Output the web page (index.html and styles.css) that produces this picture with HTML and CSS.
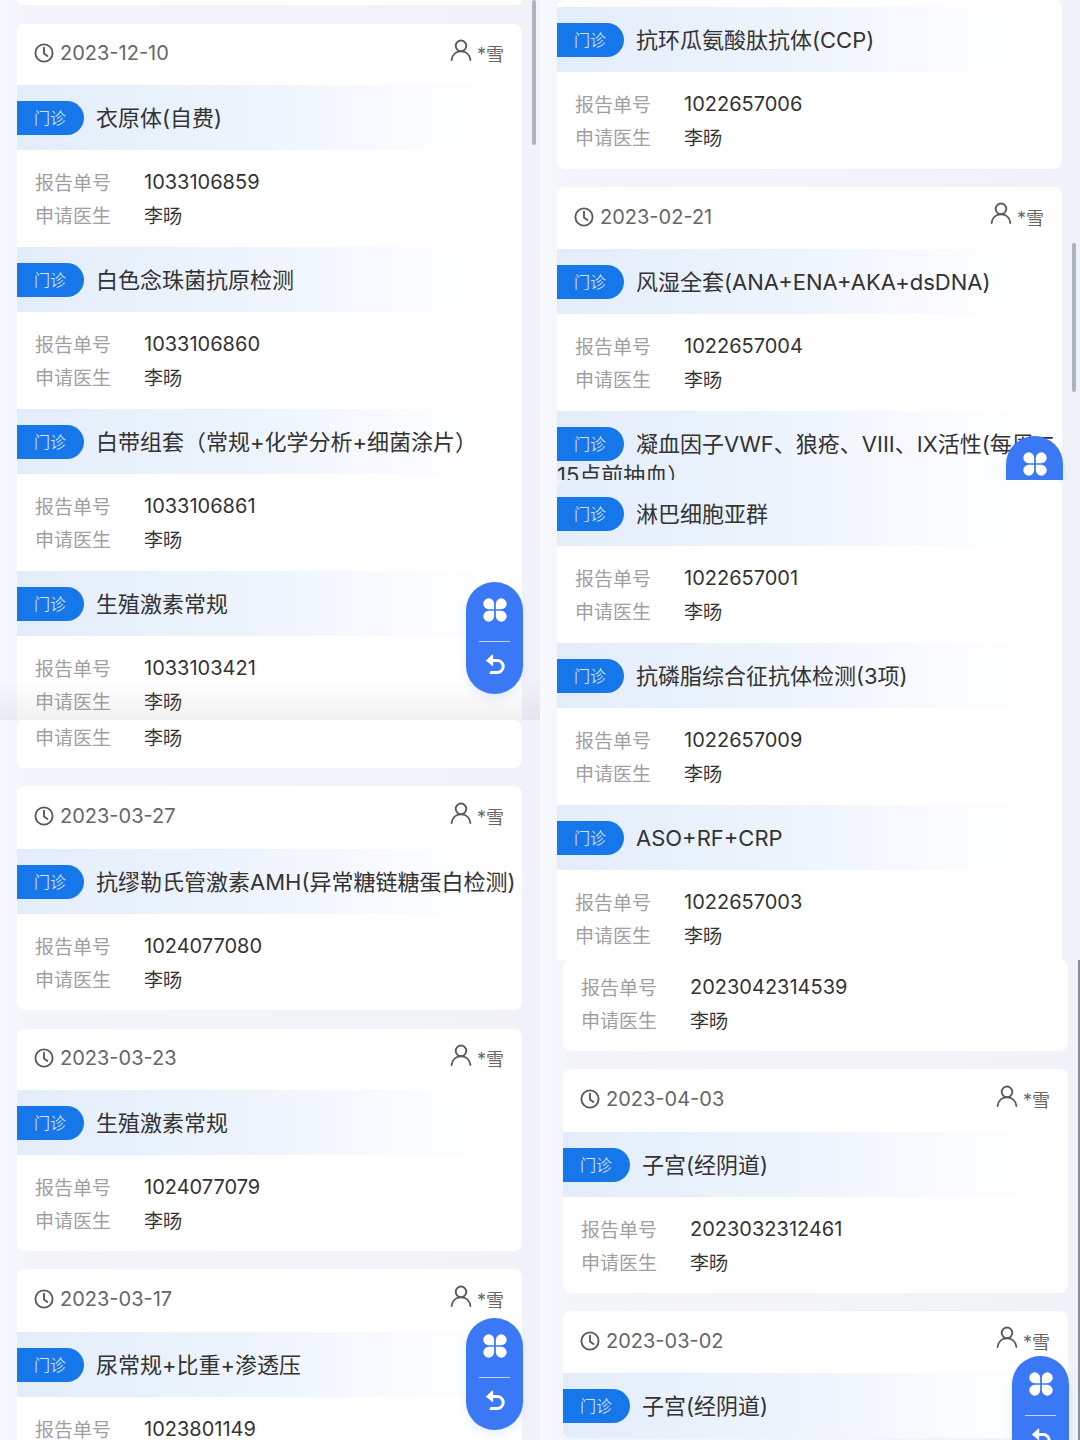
FILE: index.html
```html
<!DOCTYPE html>
<html lang="zh-CN">
<head>
    <meta charset="UTF-8">
    <meta name="viewport" content="width=device-width, initial-scale=1.0">
    <title>检验报告</title>
    <link rel="stylesheet" href="styles.css">
</head>
<body>
    <!-- shared icons -->
    <svg class="icon-defs" width="0" height="0">
        <symbol id="i-clock" viewBox="0 0 20 20">
            <circle cx="10" cy="10" r="8.6" fill="none" stroke="currentColor" stroke-width="1.9"/>
            <path d="M10 4.8V10.4L13.4 13" fill="none" stroke="currentColor" stroke-width="1.9" stroke-linecap="round" stroke-linejoin="round"/>
        </symbol>
        <symbol id="i-user" viewBox="0 0 22 22">
            <circle cx="11" cy="6.8" r="5.3" fill="none" stroke="currentColor" stroke-width="1.9"/>
            <path d="M1.6 21C2.2 15.6 6 12.2 11 12.2S19.8 15.6 20.4 21" fill="none" stroke="currentColor" stroke-width="1.9" stroke-linecap="round"/>
        </symbol>
        <symbol id="i-clover" viewBox="0 0 24 24">
            <path d="M11.2 11.2V6.2A5 5 0 1 0 6.2 11.2Z" fill="currentColor"/>
            <path d="M12.8 11.2V6.2A5 5 0 1 1 17.8 11.2Z" fill="currentColor"/>
            <path d="M11.2 12.8V17.8A5 5 0 1 1 6.2 12.8Z" fill="currentColor"/>
            <path d="M12.8 12.8V17.8A5 5 0 1 0 17.8 12.8Z" fill="currentColor"/>
        </symbol>
        <symbol id="i-back" viewBox="0 0 24 24">
            <path d="M5 8.5H14.2A6 6 0 0 1 14.2 20.5H8" fill="none" stroke="currentColor" stroke-width="3" stroke-linecap="round"/>
            <path d="M9.5 3.2L4 8.5L9.5 13.2Z" fill="currentColor" stroke="currentColor" stroke-width="1.4" stroke-linejoin="round"/>
        </symbol>
    </svg>

    <div class="collage">
        <div class="column">
            <!-- left, upper shot -->
            <section class="shot shot-left-a">
                <div class="card card-edge"></div>
                <div class="card">
                    <div class="card-head">
                        <span class="date"><svg class="icon-clock"><use href="#i-clock"/></svg>2023-12-10</span>
                        <span class="patient"><svg class="icon-user"><use href="#i-user"/></svg>*雪</span>
                    </div>
                    <div class="item-bar"><span class="tag">门诊</span><span class="item-name">衣原体(自费)</span></div>
                    <div class="item-body">
                        <div class="row"><span class="label">报告单号</span><span class="value">1033106859</span></div>
                        <div class="row"><span class="label">申请医生</span><span class="value">李旸</span></div>
                    </div>
                    <div class="item-bar"><span class="tag">门诊</span><span class="item-name">白色念珠菌抗原检测</span></div>
                    <div class="item-body">
                        <div class="row"><span class="label">报告单号</span><span class="value">1033106860</span></div>
                        <div class="row"><span class="label">申请医生</span><span class="value">李旸</span></div>
                    </div>
                    <div class="item-bar"><span class="tag">门诊</span><span class="item-name">白带组套（常规+化学分析+细菌涂片）</span></div>
                    <div class="item-body">
                        <div class="row"><span class="label">报告单号</span><span class="value">1033106861</span></div>
                        <div class="row"><span class="label">申请医生</span><span class="value">李旸</span></div>
                    </div>
                    <div class="item-bar"><span class="tag">门诊</span><span class="item-name">生殖激素常规</span></div>
                    <div class="item-body">
                        <div class="row"><span class="label">报告单号</span><span class="value">1033103421</span></div>
                        <div class="row"><span class="label">申请医生</span><span class="value">李旸</span></div>
                    </div>
                </div>
                <div class="shade"></div>
                <div class="scroll-thumb thumb-left"></div>
                <div class="fab fab-left-a">
                    <svg class="icon-clover"><use href="#i-clover"/></svg>
                    <div class="fab-line"></div>
                    <svg class="icon-back"><use href="#i-back"/></svg>
                </div>
            </section>

            <!-- left, lower shot -->
            <section class="shot shot-left-b">
                <div class="card">
                    <div class="item-body tail">
                        <div class="row"><span class="label">申请医生</span><span class="value">李旸</span></div>
                    </div>
                </div>
                <div class="card card-single card-wide-gap">
                    <div class="card-head tall">
                        <span class="date"><svg class="icon-clock"><use href="#i-clock"/></svg>2023-03-27</span>
                        <span class="patient"><svg class="icon-user"><use href="#i-user"/></svg>*雪</span>
                    </div>
                    <div class="item-bar"><span class="tag">门诊</span><span class="item-name">抗缪勒氏管激素AMH(异常糖链糖蛋白检测)</span></div>
                    <div class="item-body">
                        <div class="row"><span class="label">报告单号</span><span class="value">1024077080</span></div>
                        <div class="row"><span class="label">申请医生</span><span class="value">李旸</span></div>
                    </div>
                </div>
                <div class="card card-single">
                    <div class="card-head">
                        <span class="date"><svg class="icon-clock"><use href="#i-clock"/></svg>2023-03-23</span>
                        <span class="patient"><svg class="icon-user"><use href="#i-user"/></svg>*雪</span>
                    </div>
                    <div class="item-bar"><span class="tag">门诊</span><span class="item-name">生殖激素常规</span></div>
                    <div class="item-body">
                        <div class="row"><span class="label">报告单号</span><span class="value">1024077079</span></div>
                        <div class="row"><span class="label">申请医生</span><span class="value">李旸</span></div>
                    </div>
                </div>
                <div class="card">
                    <div class="card-head tall">
                        <span class="date"><svg class="icon-clock"><use href="#i-clock"/></svg>2023-03-17</span>
                        <span class="patient"><svg class="icon-user"><use href="#i-user"/></svg>*雪</span>
                    </div>
                    <div class="item-bar"><span class="tag">门诊</span><span class="item-name">尿常规+比重+渗透压</span></div>
                    <div class="item-body">
                        <div class="row"><span class="label">报告单号</span><span class="value">1023801149</span></div>
                    </div>
                </div>
                <div class="fab fab-left-b">
                    <svg class="icon-clover"><use href="#i-clover"/></svg>
                    <div class="fab-line"></div>
                    <svg class="icon-back"><use href="#i-back"/></svg>
                </div>
            </section>
        </div>

        <div class="column">
            <!-- right, upper shot -->
            <section class="shot shot-right-a">
                <div class="card">
                    <div class="card-top"></div>
                    <div class="item-bar"><span class="tag">门诊</span><span class="item-name">抗环瓜氨酸肽抗体(CCP)</span></div>
                    <div class="item-body">
                        <div class="row"><span class="label">报告单号</span><span class="value">1022657006</span></div>
                        <div class="row"><span class="label">申请医生</span><span class="value">李旸</span></div>
                    </div>
                </div>
                <div class="card">
                    <div class="card-head mid">
                        <span class="date"><svg class="icon-clock"><use href="#i-clock"/></svg>2023-02-21</span>
                        <span class="patient"><svg class="icon-user"><use href="#i-user"/></svg>*雪</span>
                    </div>
                    <div class="item-bar"><span class="tag">门诊</span><span class="item-name">风湿全套(ANA+ENA+AKA+dsDNA)</span></div>
                    <div class="item-body">
                        <div class="row"><span class="label">报告单号</span><span class="value">1022657004</span></div>
                        <div class="row"><span class="label">申请医生</span><span class="value">李旸</span></div>
                    </div>
                    <div class="item-bar"><span class="tag">门诊</span><span class="item-name">凝血因子VWF、狼疮、VIII、IX活性(每周二15点前抽血）</span></div>
                </div>
                <div class="scroll-thumb thumb-right"></div>
                <div class="fab fab-right-a">
                    <svg class="icon-clover"><use href="#i-clover"/></svg>
                </div>
            </section>

            <!-- right, middle shot -->
            <section class="shot shot-right-b">
                <div class="card">
                    <div class="item-bar first"><span class="tag">门诊</span><span class="item-name">淋巴细胞亚群</span></div>
                    <div class="item-body">
                        <div class="row"><span class="label">报告单号</span><span class="value">1022657001</span></div>
                        <div class="row"><span class="label">申请医生</span><span class="value">李旸</span></div>
                    </div>
                    <div class="item-bar"><span class="tag">门诊</span><span class="item-name">抗磷脂综合征抗体检测(3项)</span></div>
                    <div class="item-body">
                        <div class="row"><span class="label">报告单号</span><span class="value">1022657009</span></div>
                        <div class="row"><span class="label">申请医生</span><span class="value">李旸</span></div>
                    </div>
                    <div class="item-bar"><span class="tag">门诊</span><span class="item-name">ASO+RF+CRP</span></div>
                    <div class="item-body">
                        <div class="row"><span class="label">报告单号</span><span class="value">1022657003</span></div>
                        <div class="row"><span class="label">申请医生</span><span class="value">李旸</span></div>
                    </div>
                </div>
            </section>

            <!-- right, lower shot -->
            <section class="shot shot-right-c">
                <div class="card">
                    <div class="item-body tail-two">
                        <div class="row"><span class="label">报告单号</span><span class="value">2023042314539</span></div>
                        <div class="row"><span class="label">申请医生</span><span class="value">李旸</span></div>
                    </div>
                </div>
                <div class="card card-single">
                    <div class="card-head tall">
                        <span class="date"><svg class="icon-clock"><use href="#i-clock"/></svg>2023-04-03</span>
                        <span class="patient"><svg class="icon-user"><use href="#i-user"/></svg>*雪</span>
                    </div>
                    <div class="item-bar"><span class="tag">门诊</span><span class="item-name">子宫(经阴道)</span></div>
                    <div class="item-body">
                        <div class="row"><span class="label">报告单号</span><span class="value">2023032312461</span></div>
                        <div class="row"><span class="label">申请医生</span><span class="value">李旸</span></div>
                    </div>
                </div>
                <div class="card">
                    <div class="card-head mid">
                        <span class="date"><svg class="icon-clock"><use href="#i-clock"/></svg>2023-03-02</span>
                        <span class="patient"><svg class="icon-user"><use href="#i-user"/></svg>*雪</span>
                    </div>
                    <div class="item-bar"><span class="tag">门诊</span><span class="item-name">子宫(经阴道)</span></div>
                </div>
                <div class="scroll-edge"></div>
                <div class="fab fab-right-c">
                    <svg class="icon-clover"><use href="#i-clover"/></svg>
                    <div class="fab-line"></div>
                    <svg class="icon-back"><use href="#i-back"/></svg>
                </div>
            </section>
        </div>
    </div>
</body>
</html>
```

FILE: styles.css
```css
* {
    box-sizing: border-box;
}
body {
    margin: 0;
    width: 1080px;
    height: 1440px;
    overflow: hidden;
    background: #f3f5fb;
    font-family: Inter, "Noto Sans CJK SC", sans-serif;
    font-size: 19px;
    color: #333;
}
.icon-defs {
    position: absolute;
}
.collage {
    display: grid;
    grid-template-columns: 540px 540px;
}
.shot {
    position: relative;
    overflow: hidden;
    padding: 0 18px 0 17px;
    background: linear-gradient(to right, #f7f9fe, #f3f5fb 5%, #f1f3f9 95%, #eff2f8);
}
.shot-left-a { height: 720px; }
.shot-left-b { height: 720px; }
.shot-right-a { height: 480px; }
.shot-right-b { height: 480px; }
.shot-right-c { height: 480px; padding-left: 23px; padding-right: 12px; }

/* cards */
.card {
    background: #fff;
    border-radius: 8px;
    margin-bottom: 18px;
    overflow: hidden;
}
.card-wide-gap {
    margin-bottom: 19px;
}
.card-edge {
    height: 5px;
    margin-bottom: 19px;
    border-radius: 0 0 8px 8px;
}
.card-top {
    height: 7px;
}
.card-head {
    display: flex;
    justify-content: space-between;
    align-items: center;
    height: 61px;
    padding: 0 18px 3px 17px;
    color: #666;
    font-size: 20px;
}
.card-head.mid { height: 62px; }
.card-head.tall { height: 63px; }
.date,
.patient {
    display: flex;
    align-items: center;
}
.patient {
    font-size: 18px;
}
.icon-clock {
    width: 20px;
    height: 20px;
    margin-right: 6px;
    color: #5a5a5a;
}
.icon-user {
    width: 22px;
    height: 22px;
    margin: -7px 5px 0 0;
    color: #5a5a5a;
}

/* test name bar */
.item-bar {
    min-height: 65px;
    padding-top: 16px;
    padding-bottom: 11px;
    line-height: 20px;
    font-size: 22px;
    color: #333;
    background: linear-gradient(to right, #e3edfa, #ecf3fc 40%, #f5f8fe 65%, #fcfdff 85%, #fff);
}
.item-bar.first {
    padding-top: 17px;
}
.tag {
    display: inline-block;
    width: 67px;
    height: 34px;
    margin-right: 12px;
    margin-bottom: 4px;
    padding-right: 1px;
    border-radius: 0 17px 17px 0;
    background: #1677ea;
    color: #f2f7ff;
    font-size: 16px;
    font-weight: 300;
    line-height: 34px;
    text-align: center;
    vertical-align: middle;
}

/* report rows */
.item-body {
    height: 97px;
    padding: 15px 18px 0;
}
.card-single .item-body {
    height: 96px;
}
.item-body.tail {
    height: 48px;
    padding-top: 0;
}
.item-body.tail-two {
    height: 91px;
    padding-top: 10px;
}
.row {
    display: flex;
    height: 33px;
    align-items: center;
}
.label {
    width: 109px;
    color: #a0a0a0;
}
.value {
    color: #333;
    font-size: 20px;
}
/* the doctor's name runs a little smaller than the report number */
.row + .row .value,
.tail .value {
    font-size: 19px;
}

/* floating buttons */
.fab {
    position: absolute;
    width: 57px;
    height: 112px;
    border-radius: 29px;
    background: #3b78f5;
    color: #fff;
    display: flex;
    flex-direction: column;
    align-items: center;
    padding-top: 15px;
    box-shadow: 0 4px 10px rgba(59, 120, 245, 0.12);
}
.fab-left-a { left: 466px; top: 582px; }
.fab-left-b { left: 466px; top: 598px; }
.fab-right-a { left: 466px; top: 436px; }
.fab-right-c { left: 472px; top: 396px; }
.icon-clover {
    width: 26px;
    height: 26px;
    flex: none;
}
.fab-line {
    width: 31px;
    height: 1px;
    margin: 18px 0 10px;
    background: rgba(255, 255, 255, 0.7);
    flex: none;
}
.icon-back {
    width: 24px;
    height: 24px;
    flex: none;
}

/* scrollbars and the shadow where two shots meet */
.scroll-thumb {
    position: absolute;
    width: 4px;
    background: #aeb3bc;
    border-radius: 2px;
}
.thumb-left { left: 532px; top: 0; height: 145px; }
.thumb-right { left: 532px; top: 243px; height: 149px; }
.scroll-edge {
    position: absolute;
    right: 0;
    top: 0;
    bottom: 0;
    width: 2px;
    background: #8a8f98;
}
.shade {
    position: absolute;
    left: 0;
    right: 0;
    bottom: 0;
    height: 40px;
    background: linear-gradient(to bottom, rgba(120, 120, 120, 0), rgba(120, 120, 120, 0.1));
}
```
